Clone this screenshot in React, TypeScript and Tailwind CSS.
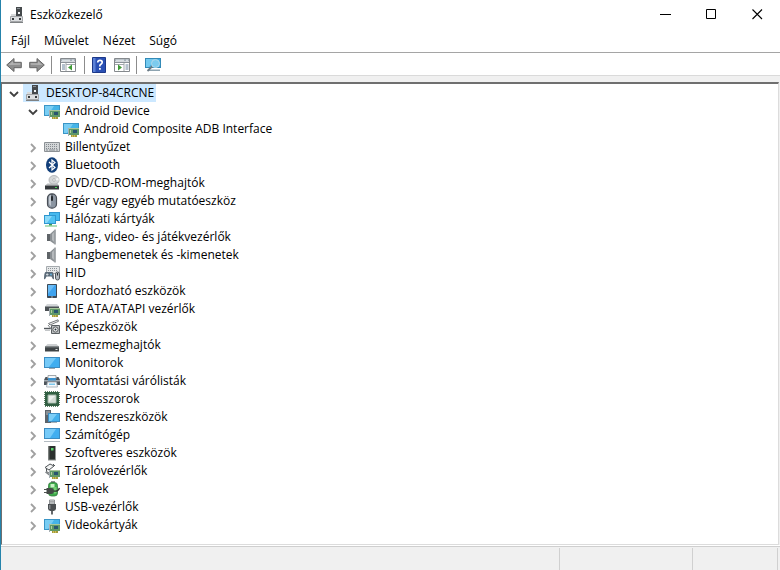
import { useState } from "react";
import type { ReactNode } from "react";
import clsx from "clsx";

type IconProps = { children: ReactNode };

function Icon({ children }: IconProps) {
  return (
    <svg viewBox="0 0 16 16" className="h-4 w-4 shrink-0" aria-hidden="true">
      {children}
    </svg>
  );
}

// Small expansion card shown in front of several device icons
function Card() {
  return (
    <g>
      <path d="M5 7h1v8H5z" fill="#a7b0b4" />
      <path d="M6 7h10v7H6z" fill="#5f9868" />
      <path d="M6 7h10v1H6z" fill="#a9c79c" />
      <path d="M7 9h1v3H7z" fill="#b5cf9f" />
      <path d="M10 9h4v3h-4z" fill="#2a5570" />
      <path d="M8 14h6v2H8z" fill="#a39a3c" />
      <path d="M9.500 14v2M11.500 14v2" stroke="#d8c860" strokeWidth=".8" />
    </g>
  );
}

const computerIcon = (
  <Icon>
    <path d="M7 0h6v9H7z" fill="#45494c" />
    <path d="M8 1h3v1H8z" fill="#8a9297" />
    <path d="M9 5h2v2H9z" fill="#f4f6f7" />
    <path d="M2 7h5v3H2z" fill="#d8dadb" />
    <path d="M1.500 9.500h12v5h-12z" fill="#dcdee0" stroke="#a3a5a8" />
    <path d="M3 11h2v2H3zM10 11h2v2h-2z" fill="#34383b" />
    <path d="M1 15h13v1H1z" fill="#7f8284" />
  </Icon>
);

const displayCardIcon = (
  <Icon>
    <path d="M0 2h16v11H0z" fill="#3a95c6" />
    <path d="M1 3h14v9H1z" fill="#45b4e8" />
    <path d="M1 3h9L4 12H1z" fill="#79cdf3" />
    <Card />
  </Icon>
);

const keyboardIcon = (
  <Icon>
    <path d="M.5 3.500h15v9H.5z" fill="#d3d6d8" stroke="#8c9195" />
    <path d="M2 5.500h12M2 7.500h12M2 9.500h12" stroke="#858b90" strokeDasharray="1 1" />
    <path d="M2 11h2M5 11h6M12 11h2" stroke="#858b90" />
  </Icon>
);

const bluetoothIcon = (
  <Icon>
    <ellipse cx="8" cy="8" rx="6" ry="7.800" fill="#123f7a" />
    <path d="M5 5l6 5.500L8 13V3l3 2.500L5 11" fill="none" stroke="#fff" strokeWidth="1.200" />
  </Icon>
);

const discIcon = (
  <Icon>
    <ellipse cx="10" cy="5" rx="5" ry="4.500" fill="#d5d7d8" stroke="#a9acae" strokeWidth=".8" />
    <path d="M10 5l4-2.500 1 3z" fill="#f3f4f4" />
    <circle cx="10" cy="5" r="1.300" fill="#fff" stroke="#9c9fa1" strokeWidth=".7" />
    <path d="M3.500 8.500h10l1.500 2H1z" fill="#b7babc" />
    <path d="M1 10.500h14v4H1z" fill="#34383b" />
    <path d="M11 12h2v1h-2z" fill="#46d458" />
  </Icon>
);

const mouseIcon = (
  <Icon>
    <rect x="3.500" y=".8" width="9" height="14.400" rx="4.300" fill="#8c96a2" stroke="#4a4f57" strokeWidth="1.200" />
    <path d="M5 5q0-3 2-3v11q-2-1-2-3z" fill="#c4cad1" />
    <path d="M8 1v6" stroke="#3d4249" />
    <rect x="7" y="3" width="2" height="5" rx="1" fill="#24282d" />
  </Icon>
);

const networkIcon = (
  <Icon>
    <path d="M5 1h11v9H5z" fill="#2f97d0" />
    <path d="M6 2h9v7H6z" fill="#45b9ee" />
    <path d="M0 4h12v9H0z" fill="#2f97d0" />
    <path d="M1 5h10v7H1z" fill="#4fc1f2" />
    <path d="M1 5h7l-5 7H1z" fill="#8bdaf9" />
    <path d="M5 13h3v1.500H5z" fill="#3d9a55" />
    <path d="M1 14.500h12v1H1z" fill="#62bd72" />
  </Icon>
);

const speakerIcon = (
  <Icon>
    <path d="M3 5h3v7H3z" fill="#5f6468" />
    <path d="M6 5l5-4.500v15L6 12z" fill="#8b9094" />
    <path d="M8 5l2-2v10l-2-2z" fill="#b5b9bc" />
    <path d="M10.500 .5h1.500v15h-1.500z" fill="#a9adb0" />
  </Icon>
);

const hidIcon = (
  <Icon>
    <path d="M2.500 1.500h13v7h-13z" fill="#e6e8e9" stroke="#a5aaae" />
    <path d="M4 3.500h10M4 5.500h10" stroke="#8c9398" strokeDasharray="1 1" />
    <path d="M1.500 7h7q1.500 1 1.500 7-1 1-2.500-2.500h-5Q1 15 0 14q0-6 1.500-7z" fill="#5b6a78" />
    <path d="M2 9.500h2.500M3.200 8.300v2.500" stroke="#dce2e7" strokeWidth=".8" />
    <circle cx="7" cy="9.500" r=".9" fill="#63b8e5" />
    <rect x="11.500" y="7" width="4" height="8" rx="2" fill="#b3bac0" stroke="#52595f" />
    <path d="M13.500 8v2.500" stroke="#2b2f33" />
  </Icon>
);

const tabletIcon = (
  <Icon>
    <rect x="3" y="1" width="10" height="14" rx=".8" fill="#3c4a57" />
    <path d="M4 2h8v11H4z" fill="#3ea3ef" />
    <path d="M4 2h7L4 11z" fill="#6bbcf7" />
    <path d="M7 14h2" stroke="#c9d1d8" strokeWidth=".8" />
  </Icon>
);

const ideIcon = (
  <Icon>
    <path d="M3 3h10l2 2.500H1z" fill="#d3d6d8" />
    <path d="M1 5h14v5H1z" fill="#4b5054" />
    <path d="M1 5h14v1H1z" fill="#92979a" />
    <Card />
  </Icon>
);

const cameraIcon = (
  <Icon>
    <path d="M4.500 4.500L14 .8l.5 1.500L6 6z" fill="#f4f4f4" stroke="#55595c" strokeWidth=".8" />
    <path d="M0 9.500h7" stroke="#54595c" strokeWidth="1.400" />
    <path d="M7.500 6.500h8v8h-8z" fill="#b9bcbe" stroke="#5a5f62" />
    <path d="M4 6l4 5" stroke="#7e8386" />
    <circle cx="11.500" cy="10.500" r="2.600" fill="#f3f4f4" stroke="#5a5e61" />
    <circle cx="11.500" cy="10.500" r="1" fill="#27323b" />
    <path d="M1 10.500h5V12H1z" fill="#c3c6c8" />
  </Icon>
);

const diskIcon = (
  <Icon>
    <path d="M3.500 7h9L15 9.500H1z" fill="#cdd0d2" />
    <path d="M1 9.500h14v5H1z" fill="#3f4447" />
    <path d="M1 9.500h14v1H1z" fill="#777c7f" />
    <path d="M11.500 12.500h2" stroke="#d8dadb" />
  </Icon>
);

const monitorIcon = (
  <Icon>
    <path d="M0 2h16v11H0z" fill="#3b8cc2" />
    <path d="M1 3h14v9H1z" fill="#41aef0" />
    <path d="M1 3h11L5 12H1z" fill="#76caf8" />
    <path d="M5 13.500h6" stroke="#9ea8af" />
  </Icon>
);

const printerIcon = (
  <Icon>
    <path d="M4 2.500h8V6H4z" fill="#f3f6f8" stroke="#8c9296" strokeWidth=".8" />
    <path d="M1.500 4h2v1.500h9V4h2L16 7v5H0V7z" fill="#4e555b" />
    <path d="M0 7h16v1.500H0z" fill="#a4abb0" />
    <path d="M4 5h8v2.500H4z" fill="#3c93cf" />
    <path d="M3.500 9h9l1 5h-11z" fill="#f5f9fc" stroke="#9aa5ad" strokeWidth=".8" />
    <path d="M5 10.500h6V12H5z" fill="#7cc7ec" />
  </Icon>
);

const processorIcon = (
  <Icon>
    <path d="M1 1h14v14H1z" fill="#315f42" />
    <path d="M1 .5h14M1 15.500h14M.5 1v14M15.500 1v14" stroke="#5f8066" strokeDasharray="1 1" />
    <path d="M4 4h8v8H4z" fill="#edf1ee" stroke="#9db3a2" />
    <path d="M5 11l6-6v6z" fill="#d4dcd6" />
  </Icon>
);

const systemIcon = (
  <Icon>
    <path d="M1 1h6v13H1z" fill="#5c646b" />
    <path d="M2 3h4M2 5h4" stroke="#b4bbc1" />
    <path d="M4 4h12v9H4z" fill="#3b8cc2" />
    <path d="M5 5h10v7H5z" fill="#43b0ec" />
    <path d="M5 5h8l-5.500 7H5z" fill="#7bcdf7" />
    <path d="M7 13.500h6" stroke="#aab2b8" />
  </Icon>
);

const desktopIcon = (
  <Icon>
    <path d="M0 1h16v11H0z" fill="#3b8cc2" />
    <path d="M1 2h14v9H1z" fill="#41aef0" />
    <path d="M1 2h11l-6 9H1z" fill="#76caf8" />
    <path d="M0 14.500h16" stroke="#b3bbc1" />
  </Icon>
);

const softwareIcon = (
  <Icon>
    <path d="M4.500 1h7v14h-7z" fill="#2b302e" />
    <path d="M4.500 1h1v14h-1z" fill="#646967" />
    <path d="M7 3h2.500v2.500H7z" fill="#58d26b" />
    <path d="M4 15h8" stroke="#8b8f8d" />
  </Icon>
);

const storageIcon = (
  <Icon>
    <path d="M1 4.500L6 1l4 2-5 4zM2.500 5.500v3l3 2" fill="#f2f3f3" stroke="#4f5457" />
    <path d="M9 1l2 2" stroke="#4f5457" />
    <path d="M1.500 9l4 3" stroke="#7c8184" strokeWidth="1.500" />
    <Card />
  </Icon>
);

const batteryIcon = (
  <Icon>
    <path d="M7 0h4v2H7z" fill="#8d9392" />
    <rect x="4.500" y="1.500" width="9" height="13.500" rx="3" fill="#3dab4b" stroke="#35783f" strokeWidth=".8" />
    <path d="M6.500 3h4v3.500h-4z" fill="#c8f0c4" />
    <path d="M9.500 6h3v6q-2 1-3 0z" fill="#75d074" />
    <path d="M2.500 7H7q3 0 3 3t-3 3H2.500z" fill="#454a47" />
    <path d="M0 8.500h3M0 11.500h3" stroke="#4f5451" />
    <path d="M10 10q4 1 5.500-3" fill="none" stroke="#303532" strokeWidth="1.300" />
  </Icon>
);

const usbIcon = (
  <Icon>
    <path d="M5.500 1h5v4h-5z" fill="#dddfe0" stroke="#7a7e81" strokeWidth=".8" />
    <path d="M6.500 2.300h1v1.200h-1zM8.500 2.300h1v1.200h-1z" fill="#4a4e50" />
    <path d="M4 5h8v4.500q0 2-2.500 2.500h-3Q4 11.500 4 9.500z" fill="#4b4f52" />
    <path d="M5 6h1.500v4H5z" fill="#85898c" />
    <path d="M8 12v3.500" stroke="#54585b" strokeWidth="1.800" />
  </Icon>
);

type Device = { label: string; icon: ReactNode };

const DEVICES: Device[] = [
  { label: "Billentyűzet", icon: keyboardIcon },
  { label: "Bluetooth", icon: bluetoothIcon },
  { label: "DVD/CD-ROM-meghajtók", icon: discIcon },
  { label: "Egér vagy egyéb mutatóeszköz", icon: mouseIcon },
  { label: "Hálózati kártyák", icon: networkIcon },
  { label: "Hang-, video- és játékvezérlők", icon: speakerIcon },
  { label: "Hangbemenetek és -kimenetek", icon: speakerIcon },
  { label: "HID", icon: hidIcon },
  { label: "Hordozható eszközök", icon: tabletIcon },
  { label: "IDE ATA/ATAPI vezérlők", icon: ideIcon },
  { label: "Képeszközök", icon: cameraIcon },
  { label: "Lemezmeghajtók", icon: diskIcon },
  { label: "Monitorok", icon: monitorIcon },
  { label: "Nyomtatási várólisták", icon: printerIcon },
  { label: "Processzorok", icon: processorIcon },
  { label: "Rendszereszközök", icon: systemIcon },
  { label: "Számítógép", icon: desktopIcon },
  { label: "Szoftveres eszközök", icon: softwareIcon },
  { label: "Tárolóvezérlők", icon: storageIcon },
  { label: "Telepek", icon: batteryIcon },
  { label: "USB-vezérlők", icon: usbIcon },
  { label: "Videokártyák", icon: displayCardIcon },
];

type RowProps = Device & {
  open?: boolean;
  leaf?: boolean;
  selected?: boolean;
  onToggle?: () => void;
};

function Row({ label, icon, open, leaf, selected, onToggle }: RowProps) {
  return (
    <div className="flex h-[18px] items-center">
      {leaf ? (
        <span className="w-[19px]" />
      ) : (
        <button
          type="button"
          aria-label={label}
          aria-expanded={!!open}
          onClick={onToggle}
          className="flex h-[18px] w-[19px] items-center justify-center pt-px"
        >
          <svg viewBox="0 0 10 10" className="h-[10px] w-[10px]" fill="none" strokeWidth="1.8">
            {open ? <path d="M1 3l4 4 4-4" stroke="#404040" /> : <path d="M3 1l4 4-4 4" stroke="#a0a0a0" />}
          </svg>
        </button>
      )}
      <span className={clsx("flex h-[18px] items-center gap-[5px] px-[2px]", selected && "bg-[#cce8ff]")}>
        {icon}
        <span className="whitespace-nowrap leading-[18px]">{label}</span>
      </span>
    </div>
  );
}

function TitleBar() {
  return (
    <header className="flex h-[29px] items-center pl-2">
      {computerIcon}
      <h1 className="flex-1 pl-[5px]">Eszközkezelő</h1>
      <button type="button" aria-label="Kis méret" className="flex h-full w-[46px] items-center justify-center">
        <svg viewBox="0 0 11 11" className="h-[11px] w-[11px]" stroke="#000">
          <path d="M0 5.500h11" />
        </svg>
      </button>
      <button type="button" aria-label="Teljes méret" className="flex h-full w-[46px] items-center justify-center">
        <svg viewBox="0 0 11 11" className="h-[11px] w-[11px]" fill="none" stroke="#000">
          <path d="M.5.5h9v9h-9z" />
        </svg>
      </button>
      <button type="button" aria-label="Bezárás" className="flex h-full w-[46px] items-center justify-center">
        <svg viewBox="0 0 11 11" className="h-[11px] w-[11px]" stroke="#000" strokeWidth="1.100">
          <path d="M.5.5l9.500 9.500M10 .5L.5 10" />
        </svg>
      </button>
    </header>
  );
}

function PaneIcon({ right }: { right?: boolean }) {
  return (
    <Icon>
      <path d="M.5 1.500h15v13H.5z" fill="#fff" stroke="#85898d" />
      <path d="M1 2h14v2.500H1z" fill="#a6b0b9" />
      <path d="M2 3.200h8M12 3.200h2" stroke="#eef1f3" />
      <path d="M1 5.500h14" stroke="#8b9299" />
      {right ? (
        <>
          <path d="M10 6v8M1 7.500h9" stroke="#a2a8ad" />
          <path d="M11.500 8h3M11.500 10h3M11.500 12h3" stroke="#69819b" />
          <path d="M4 7.500l4 3-4 3z" fill="#3f9a37" />
        </>
      ) : (
        <>
          <path d="M6 6v8M6 7.500h9" stroke="#a2a8ad" />
          <path d="M2 8h3M2 10h3M2 12h3" stroke="#69819b" />
          <path d="M12 7.500l-4 3 4 3z" fill="#3f9a37" />
        </>
      )}
    </Icon>
  );
}

function Separator() {
  return <span className="h-[18px] w-px bg-[#8c8c8c]" />;
}

function Toolbar() {
  return (
    <div role="toolbar" className="flex h-[23px] items-center gap-[6px] border-b border-[#dadada] pt-[2px] pl-[5px]">
      <button type="button" aria-label="Vissza">
        <Icon>
          <path d="M.7 8L8 1.500v3.800h7.300v5.400H8v3.800z" fill="#8e8e8e" stroke="#666" />
          <path d="M2.500 8L7 4v2.300h7.300v1.500z" fill="#b3b3b3" />
        </Icon>
      </button>
      <button type="button" aria-label="Előre" className="pl-px">
        <Icon>
          <path d="M15.300 8L8 1.500v3.800H.7v5.400H8v3.800z" fill="#8e8e8e" stroke="#666" />
          <path d="M13.500 8L9 4v2.300H1.700v1.500z" fill="#b3b3b3" />
        </Icon>
      </button>
      <Separator />
      <button type="button" aria-label="Konzolfa" className="px-[2px]">
        <PaneIcon />
      </button>
      <Separator />
      <button type="button" aria-label="Súgó">
        <Icon>
          <path d="M1.500.5h13v15h-13z" fill="#2a50b4" stroke="#1c3889" />
          <path d="M2 1h2.500v14H2z" fill="#5d82d6" />
          <path d="M6.700 5.500Q6.800 3.300 9 3.300t2.200 2q0 1.200-1.300 2T8.800 9.500" fill="none" stroke="#fff" strokeWidth="1.700" />
          <path d="M8 11h1.800v1.800H8z" fill="#fff" />
        </Icon>
      </button>
      <button type="button" aria-label="Műveletek" className="pl-px">
        <PaneIcon right />
      </button>
      <Separator />
      <button type="button" aria-label="Hardverváltozások keresése" className="pl-[2px]">
        <Icon>
          <path d="M0 1h16v10H0z" fill="#338ab7" />
          <path d="M1 2h14v8H1z" fill="#40ade2" />
          <path d="M1 2h9l-6 8H1z" fill="#72c9ef" />
          <path d="M4 12.500h11V14H4z" fill="#8da3b0" />
          <path d="M7.500 9l-5 5" stroke="#6b7a84" strokeWidth="1.800" />
          <circle cx="10.500" cy="6.500" r="4" fill="#7ccbee" stroke="#b4d9ea" />
        </Icon>
      </button>
    </div>
  );
}

export default function App() {
  const [rootOpen, setRootOpen] = useState(true);
  const [androidOpen, setAndroidOpen] = useState(true);
  const [expanded, setExpanded] = useState<string[]>([]);

  const toggle = (label: string) =>
    setExpanded((prev) => (prev.includes(label) ? prev.filter((l) => l !== label) : [...prev, label]));

  return (
    <div className="flex min-h-screen flex-col border-l border-[#2583ab] bg-white font-['Open_Sans','Noto_Sans',sans-serif] text-[12px] leading-4 text-black">
      <TitleBar />
      <nav className="flex h-6 items-center gap-[14px] border-b border-[#a5a5a5] pl-[10px]">
        <button type="button">Fájl</button>
        <button type="button">Művelet</button>
        <button type="button">Nézet</button>
        <button type="button">Súgó</button>
      </nav>
      <Toolbar />
      <main className="flex flex-1 flex-col bg-[#f0f0f0] pt-[6px]">
        <div className="mr-px flex-1 border-t-2 border-r border-b border-l border-t-[#6f6f6f] border-r-[#dcdcdc] border-b-[#dcdcdc] border-l-[#6f6f6f] bg-white pl-[2px]">
          <Row
            label="DESKTOP-84CRCNE"
            icon={computerIcon}
            open={rootOpen}
            selected
            onToggle={() => setRootOpen(!rootOpen)}
          />
          {rootOpen && (
            <ul className="pl-[19px]">
              <li>
                <Row
                  label="Android Device"
                  icon={displayCardIcon}
                  open={androidOpen}
                  onToggle={() => setAndroidOpen(!androidOpen)}
                />
                {androidOpen && (
                  <div className="pl-[19px]">
                    <Row label="Android Composite ADB Interface" icon={displayCardIcon} leaf />
                  </div>
                )}
              </li>
              {DEVICES.map((device) => (
                <li key={device.label}>
                  <Row {...device} open={expanded.includes(device.label)} onToggle={() => toggle(device.label)} />
                </li>
              ))}
            </ul>
          )}
        </div>
      </main>
      <footer className="mt-px flex h-6 border-t border-[#cfcfcf] bg-[#f0f0f0] pt-px pr-[2px]">
        <span className="flex-1 border-r border-[#d0d0d0]" />
        <span className="w-[133px] border-r border-[#d0d0d0]" />
        <span className="w-[85px] border-r border-[#d0d0d0]" />
      </footer>
    </div>
  );
}
